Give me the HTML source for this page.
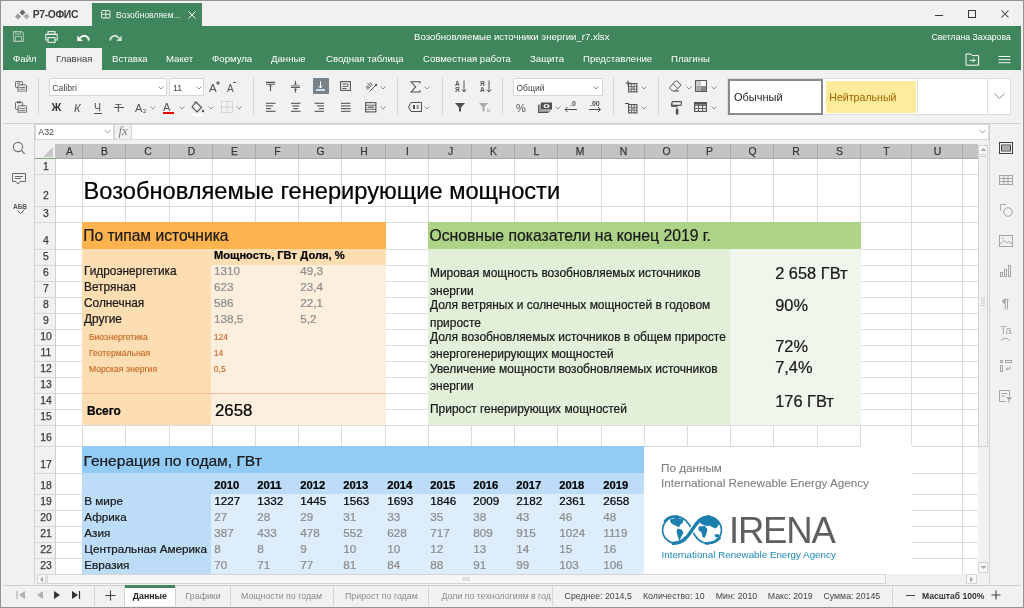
<!DOCTYPE html><html><head><meta charset="utf-8"><style>
*{margin:0;padding:0;box-sizing:border-box}
html,body{width:1024px;height:608px;overflow:hidden;background:#f1f1f1;font-family:"Liberation Sans", sans-serif;-webkit-font-smoothing:antialiased;}
.a{position:absolute}
.t{position:absolute;white-space:nowrap;line-height:1}
.b{position:absolute;white-space:nowrap;line-height:0;height:0}
#root{position:absolute;left:0;top:0;width:1024px;height:608px;will-change:transform}
</style></head><body><div id="root">
<svg class="a" style="left:14px;top:7.5px;" width="16" height="13" viewBox="0 0 16 13" fill="none" preserveAspectRatio="none"><path d="M8.5 1.5 L11.5 4.5 L8.5 7.5 L5.5 4.5Z" fill="#6a6a6a"/><path d="M4 5.5 L7 8.5 L4 11.5 L1 8.5Z" fill="#9a9a9a"/><path d="M12.5 5.5 L15.5 8.5 L12.5 11.5 L9.5 8.5Z" fill="#adadad"/></svg>
<div class="b" style="left:32.8px;top:14.63px;font-size:10.3px;color:#3a3a3a;font-weight:bold;letter-spacing:-0.35px">Р7-ОФИС</div>
<div class="a" style="left:92px;top:3px;width:110px;height:23px;background:#40865c;"></div>
<svg class="a" style="left:101px;top:10px;" width="10" height="9" viewBox="0 0 10 9" fill="none" preserveAspectRatio="none"><rect x="0.5" y="0.5" width="8.5" height="7.5" rx="1" stroke="#e8f0ea" stroke-width="1"/><path d="M4.75 0.5V8M0.5 4.25H9" stroke="#e8f0ea" stroke-width="0.9"/></svg>
<div class="b" style="left:116px;top:14.55px;font-size:8.5px;color:#f4f8f5;font-weight:normal;">Возобновляем...</div>
<svg class="a" style="left:187.5px;top:10.5px;" width="8" height="8" viewBox="0 0 8 8" fill="none" preserveAspectRatio="none"><path d="M0.5 0.5L7.5 7.5M7.5 0.5L0.5 7.5" stroke="#f4f8f5" stroke-width="1"/></svg>
<div class="a" style="left:935px;top:15px;width:8px;height:1px;background:#3a3a3a;"></div>
<div class="a" style="left:968px;top:10px;width:8px;height:8px;background:transparent;border:1px solid #3a3a3a"></div>
<svg class="a" style="left:1001px;top:10px;" width="8" height="8" viewBox="0 0 8 8" fill="none" preserveAspectRatio="none"><path d="M0.5 0.5L7.5 7.5M7.5 0.5L0.5 7.5" stroke="#3a3a3a" stroke-width="1.05"/></svg>
<div class="a" style="left:3px;top:26px;width:1018px;height:44px;background:#40865c;"></div>
<svg class="a" style="left:13px;top:31px;" width="11" height="11" viewBox="0 0 11 11" fill="none" preserveAspectRatio="none"><path d="M0.6 0.6H8.6L10.4 2.4V10.4H0.6Z" stroke="#a9c6b2" stroke-width="1.1"/><rect x="2.8" y="0.6" width="4.6" height="2.6" stroke="#a9c6b2" stroke-width="0.9"/><rect x="2.4" y="5.6" width="6.2" height="4.8" stroke="#a9c6b2" stroke-width="1"/></svg>
<svg class="a" style="left:45px;top:31px;" width="13" height="12" viewBox="0 0 13 12" fill="none" preserveAspectRatio="none"><rect x="3" y="0.6" width="7" height="2.8" stroke="#e6efe9" stroke-width="1.1"/><path d="M3 9H0.8V3.4H12.2V9H10" stroke="#e6efe9" stroke-width="1.1"/><rect x="3" y="6.6" width="7" height="4.8" stroke="#e6efe9" stroke-width="1.1"/></svg>
<svg class="a" style="left:77px;top:33px;" width="13" height="8" viewBox="0 0 13 8" fill="none" preserveAspectRatio="none"><path d="M12 7.5 C11 2, 6 1.5, 3 5" stroke="#fff" stroke-width="1.9" fill="none"/><path d="M0.3 2.5V8H5.8Z" fill="#fff"/></svg>
<svg class="a" style="left:109px;top:33px;" width="13" height="8" viewBox="0 0 13 8" fill="none" preserveAspectRatio="none"><path d="M1 7.5 C2 2, 7 1.5, 10 5" stroke="#cfe0d5" stroke-width="1.9" fill="none"/><path d="M12.7 2.5V8H7.2Z" fill="#cfe0d5"/></svg>
<div class="b" style="left:414px;top:36.67px;font-size:9.6px;color:#fff;font-weight:normal;">Возобновляемые источники энергии_r7.xlsx</div>
<div class="b" style="left:931.5px;top:36.99px;font-size:8.7px;color:#fff;font-weight:normal;">Светлана Захарова</div>
<div class="a" style="left:46px;top:48px;width:56px;height:22px;background:#f1f1f1;"></div>
<div class="b" style="left:13px;top:58.67px;font-size:9.6px;color:#fff;font-weight:normal;">Файл</div>
<div class="b" style="left:56px;top:58.67px;font-size:9.6px;color:#444;font-weight:normal;">Главная</div>
<div class="b" style="left:112px;top:58.67px;font-size:9.6px;color:#fff;font-weight:normal;">Вставка</div>
<div class="b" style="left:166px;top:58.67px;font-size:9.6px;color:#fff;font-weight:normal;">Макет</div>
<div class="b" style="left:212px;top:58.67px;font-size:9.6px;color:#fff;font-weight:normal;">Формула</div>
<div class="b" style="left:271px;top:58.67px;font-size:9.6px;color:#fff;font-weight:normal;">Данные</div>
<div class="b" style="left:326px;top:58.67px;font-size:9.6px;color:#fff;font-weight:normal;">Сводная таблица</div>
<div class="b" style="left:423px;top:58.67px;font-size:9.6px;color:#fff;font-weight:normal;">Совместная работа</div>
<div class="b" style="left:530px;top:58.67px;font-size:9.6px;color:#fff;font-weight:normal;">Защита</div>
<div class="b" style="left:583px;top:58.67px;font-size:9.6px;color:#fff;font-weight:normal;">Представление</div>
<div class="b" style="left:671px;top:58.67px;font-size:9.6px;color:#fff;font-weight:normal;">Плагины</div>
<svg class="a" style="left:965px;top:53px;" width="15" height="13" viewBox="0 0 15 13" fill="none" preserveAspectRatio="none"><path d="M1 12.2V1H6L7.3 2.6H13.6V12.2Z" stroke="#fff" stroke-width="1"/><path d="M4.5 7.3H10M8 5.3L10 7.3L8 9.3" stroke="#fff" stroke-width="1"/></svg>
<svg class="a" style="left:998px;top:55px;" width="13" height="9" viewBox="0 0 13 9" fill="none" preserveAspectRatio="none"><path d="M0.5 1.5H12.5M0.5 4.6H12.5M0.5 7.7H12.5" stroke="#fff" stroke-width="0.9"/></svg>
<div class="a" style="left:3px;top:123px;width:1018px;height:1px;background:#cfcfcf;"></div>
<div class="a" style="left:38px;top:78px;width:1px;height:37px;background:#d4d4d4;"></div>
<div class="a" style="left:253px;top:78px;width:1px;height:37px;background:#d4d4d4;"></div>
<div class="a" style="left:397px;top:78px;width:1px;height:37px;background:#d4d4d4;"></div>
<div class="a" style="left:442px;top:78px;width:1px;height:37px;background:#d4d4d4;"></div>
<div class="a" style="left:502px;top:78px;width:1px;height:37px;background:#d4d4d4;"></div>
<div class="a" style="left:613px;top:78px;width:1px;height:37px;background:#d4d4d4;"></div>
<div class="a" style="left:658px;top:78px;width:1px;height:37px;background:#d4d4d4;"></div>
<svg class="a" style="left:15px;top:81px;width:12.3px;height:11.4px" width="14" height="13" viewBox="0 0 14 13" fill="none" preserveAspectRatio="none"><rect x="0.5" y="0.5" width="8" height="7" rx="1" stroke="#505050"/><rect x="3.5" y="4.5" width="9.5" height="8" rx="1" fill="#f1f1f1" stroke="#505050"/><path d="M5 7.5H11.5M5 10H11.5" stroke="#777" stroke-width="1.3"/><path d="M2 2.5H6" stroke="#505050"/></svg><svg class="a" style="left:15px;top:100.5px;width:12.3px;height:12.3px" width="14" height="14" viewBox="0 0 14 14" fill="none" preserveAspectRatio="none"><rect x="0.5" y="1.5" width="8" height="8" rx="1" stroke="#505050"/><rect x="2.5" y="0.5" width="4" height="2" fill="#505050"/><rect x="3.5" y="5.5" width="9.5" height="8" rx="1" fill="#f1f1f1" stroke="#505050"/><path d="M5 8.5H11.5M5 11H11.5" stroke="#777" stroke-width="1.3"/></svg><div class="a" style="left:49px;top:78px;width:118px;height:18px;background:#fff;border:1px solid #d6d6d6"></div><div class="b" style="left:52.3px;top:87.99px;font-size:8.7px;color:#444;font-weight:normal;">Calibri</div><svg class="a" style="left:158px;top:86px;" width="6" height="4" viewBox="0 0 6 4" fill="none" preserveAspectRatio="none"><path d="M0.5 0.5L3 3L5.5 0.5" stroke="#888" stroke-width="0.9"/></svg><div class="a" style="left:169px;top:78px;width:35px;height:18px;background:#fff;border:1px solid #d6d6d6"></div><div class="b" style="left:173px;top:87.99px;font-size:8.7px;color:#444;font-weight:normal;">11</div><svg class="a" style="left:196px;top:86px;" width="6" height="4" viewBox="0 0 6 4" fill="none" preserveAspectRatio="none"><path d="M0.5 0.5L3 3L5.5 0.5" stroke="#888" stroke-width="0.9"/></svg><div class="b" style="left:209px;top:88.02px;font-size:11.5px;color:#505050;font-weight:normal;">A</div><svg class="a" style="left:216px;top:81px;" width="4" height="4" viewBox="0 0 4 4" fill="none" preserveAspectRatio="none"><path d="M2 0V4M0 2H4" stroke="#505050" stroke-width="1"/></svg><div class="b" style="left:227px;top:88.53px;font-size:10px;color:#505050;font-weight:normal;">A</div><div class="a" style="left:233px;top:82px;width:3px;height:1.2px;background:#505050;"></div><div class="b" style="left:51.5px;top:107.26px;font-size:10.8px;color:#333;font-weight:bold;">Ж</div><div class="b" style="left:74px;top:108.19px;font-size:11px;color:#555;font-weight:normal;font-style:italic">К</div><div class="b" style="left:94px;top:107.36px;font-size:10.5px;color:#505050;font-weight:normal;">Ч</div><div class="a" style="left:94px;top:113px;width:8px;height:1px;background:#505050;"></div><div class="b" style="left:115px;top:108.19px;font-size:11px;color:#505050;font-weight:normal;">Т</div><div class="a" style="left:114px;top:107px;width:10px;height:1px;background:#505050;"></div><div class="b" style="left:135px;top:108.19px;font-size:11px;color:#505050;font-weight:normal;">A</div><div class="b" style="left:143px;top:110.92px;font-size:6px;color:#505050;font-weight:normal;">2</div><svg class="a" style="left:150px;top:106px;" width="6" height="4" viewBox="0 0 6 4" fill="none" preserveAspectRatio="none"><path d="M0.5 0.5L3 3L5.5 0.5" stroke="#888" stroke-width="0.9"/></svg><div class="b" style="left:163px;top:107.19px;font-size:11px;color:#505050;font-weight:normal;">A</div><div class="a" style="left:163px;top:112px;width:11px;height:2px;background:#e00;"></div><svg class="a" style="left:179px;top:106px;" width="6" height="4" viewBox="0 0 6 4" fill="none" preserveAspectRatio="none"><path d="M0.5 0.5L3 3L5.5 0.5" stroke="#888" stroke-width="0.9"/></svg><svg class="a" style="left:191px;top:101px;" width="14" height="13" viewBox="0 0 14 13" fill="none" preserveAspectRatio="none"><path d="M5 1L10.5 6.5L6 11L1 6Z" stroke="#505050" stroke-width="1.1" fill="#f1f1f1"/><path d="M3 0.5L5 2.5" stroke="#505050"/><circle cx="12" cy="10" r="1.2" fill="#505050"/></svg><div class="a" style="left:191px;top:114px;width:12px;height:2px;background:#fff;"></div><svg class="a" style="left:208px;top:106px;" width="6" height="4" viewBox="0 0 6 4" fill="none" preserveAspectRatio="none"><path d="M0.5 0.5L3 3L5.5 0.5" stroke="#888" stroke-width="0.9"/></svg><svg class="a" style="left:221px;top:101px;" width="12" height="12" viewBox="0 0 12 12" fill="none" preserveAspectRatio="none"><path d="M0.5 0.5H11.5V11.5H0.5ZM6 0.5V11.5M0.5 6H11.5" stroke="#bbb" stroke-dasharray="1 1"/></svg><svg class="a" style="left:236px;top:106px;" width="6" height="4" viewBox="0 0 6 4" fill="none" preserveAspectRatio="none"><path d="M0.5 0.5L3 3L5.5 0.5" stroke="#888" stroke-width="0.9"/></svg><svg class="a" style="left:265px;top:81px;" width="12" height="11" viewBox="0 0 12 11" fill="none" preserveAspectRatio="none"><path d="M1 1.4H10M1 3.3H10" stroke="#555" stroke-width="1.1"/><path d="M5.5 3.5V10" stroke="#555" stroke-width="1.1"/><path d="M4 5.5L5.5 4L7 5.5" stroke="#555" stroke-width="0.8"/></svg><svg class="a" style="left:290px;top:80px;" width="12" height="13" viewBox="0 0 12 13" fill="none" preserveAspectRatio="none"><path d="M1 5.8H10" stroke="#999" stroke-width="1.4"/><path d="M1 7.4H10" stroke="#555" stroke-width="1.1"/><path d="M5.5 1V5M5.5 8.5V12.5" stroke="#555" stroke-width="1.1"/><path d="M4 3.5L5.5 5L7 3.5M4 10L5.5 8.5L7 10" stroke="#555" stroke-width="0.8"/></svg><div class="a" style="left:313px;top:78px;width:16px;height:16px;background:#76828c;border-radius:1px"></div><svg class="a" style="left:313px;top:78px;" width="16" height="16" viewBox="0 0 16 16" fill="none" preserveAspectRatio="none"><path d="M7.5 3.5V10" stroke="#fff" stroke-width="1"/><path d="M5.5 8L7.5 10L9.5 8" stroke="#fff" stroke-width="0.9"/><rect x="3" y="11" width="9" height="2" fill="#d8dde1"/></svg><svg class="a" style="left:340px;top:81px;" width="11" height="10" viewBox="0 0 11 10" fill="none" preserveAspectRatio="none"><rect x="0.6" y="0.6" width="9.8" height="8.8" stroke="#555" stroke-width="1.1"/><path d="M2.5 3H6.5M2.5 5.5H6.5M2.5 7.5H6.5" stroke="#555" stroke-width="1"/><path d="M6.5 3H8V5.5H6.5" stroke="#555" stroke-width="0.8"/></svg><svg class="a" style="left:365px;top:80px;" width="13" height="13" viewBox="0 0 13 13" fill="none" preserveAspectRatio="none"><text x="0" y="8" font-size="7" font-weight="bold" fill="#777" transform="rotate(-45 4 6)" font-family="Liberation Sans">ab</text><path d="M4.5 11.5L11 5" stroke="#555" stroke-width="1"/><circle cx="11" cy="5" r="1.2" fill="#555"/></svg><svg class="a" style="left:380px;top:86px;" width="6" height="4" viewBox="0 0 6 4" fill="none" preserveAspectRatio="none"><path d="M0.5 0.5L3 3L5.5 0.5" stroke="#888" stroke-width="0.9"/></svg><svg class="a" style="left:265px;top:102px;" width="11" height="11" viewBox="0 0 11 11" fill="none" preserveAspectRatio="none"><path d="M1 1.3H10.5" stroke="#555" stroke-width="1.1"/><path d="M1 3.9H8" stroke="#555" stroke-width="1.1"/><path d="M1 6.6H6" stroke="#555" stroke-width="1.1"/><path d="M1 9.3H10.5" stroke="#555" stroke-width="1.1"/></svg><svg class="a" style="left:290px;top:102px;" width="11" height="11" viewBox="0 0 11 11" fill="none" preserveAspectRatio="none"><path d="M1 1.3H10.5" stroke="#555" stroke-width="1.1"/><path d="M2.3 3.9H9.2" stroke="#555" stroke-width="1.1"/><path d="M3.3 6.6H8.2" stroke="#555" stroke-width="1.1"/><path d="M1 9.3H10.5" stroke="#555" stroke-width="1.1"/></svg><svg class="a" style="left:314px;top:102px;" width="11" height="11" viewBox="0 0 11 11" fill="none" preserveAspectRatio="none"><path d="M0.5 1.3H10" stroke="#555" stroke-width="1.1"/><path d="M3 3.9H10" stroke="#555" stroke-width="1.1"/><path d="M5 6.6H10" stroke="#555" stroke-width="1.1"/><path d="M0.5 9.3H10" stroke="#555" stroke-width="1.1"/></svg><svg class="a" style="left:340px;top:102px;" width="11" height="11" viewBox="0 0 11 11" fill="none" preserveAspectRatio="none"><path d="M1 1.3H10.5" stroke="#555" stroke-width="1.1"/><path d="M1 3.9H10.5" stroke="#555" stroke-width="1.1"/><path d="M1 6.6H10.5" stroke="#555" stroke-width="1.1"/><path d="M1 9.3H10.5" stroke="#555" stroke-width="1.1"/></svg><svg class="a" style="left:365px;top:102px;" width="12" height="11" viewBox="0 0 12 11" fill="none" preserveAspectRatio="none"><rect x="0.6" y="0.6" width="10.3" height="9.3" stroke="#555" stroke-width="1.1"/><path d="M0.6 3.2H11M0.6 7.3H11" stroke="#555" stroke-width="0.9"/><path d="M2.5 5.2H9" stroke="#555" stroke-width="1.2"/></svg><svg class="a" style="left:380px;top:106px;" width="6" height="4" viewBox="0 0 6 4" fill="none" preserveAspectRatio="none"><path d="M0.5 0.5L3 3L5.5 0.5" stroke="#888" stroke-width="0.9"/></svg><svg class="a" style="left:410px;top:81px;" width="11" height="12" viewBox="0 0 11 12" fill="none" preserveAspectRatio="none"><path d="M10 2.5V0.8H1.2L5.6 5.9L1.2 11H10V9.3" stroke="#505050" stroke-width="1.1" stroke-linejoin="miter"/></svg><svg class="a" style="left:424px;top:86px;" width="6" height="4" viewBox="0 0 6 4" fill="none" preserveAspectRatio="none"><path d="M0.5 0.5L3 3L5.5 0.5" stroke="#888" stroke-width="0.9"/></svg><svg class="a" style="left:408px;top:102px;" width="14" height="10" viewBox="0 0 14 10" fill="none" preserveAspectRatio="none"><path d="M3 0.5H13.5V9.5H3L0.5 5Z" stroke="#505050"/><rect x="5" y="3" width="2" height="4" fill="#505050"/><path d="M8.5 4H11M8.5 6H11" stroke="#505050"/></svg><svg class="a" style="left:424px;top:106px;" width="6" height="4" viewBox="0 0 6 4" fill="none" preserveAspectRatio="none"><path d="M0.5 0.5L3 3L5.5 0.5" stroke="#888" stroke-width="0.9"/></svg><div class="b" style="left:455px;top:83.75px;font-size:6.5px;color:#555;font-weight:bold;">A</div><div class="b" style="left:455px;top:89.75px;font-size:6.5px;color:#555;font-weight:bold;">Я</div><svg class="a" style="left:461px;top:80px;" width="6" height="13" viewBox="0 0 6 13" fill="none" preserveAspectRatio="none"><path d="M3 0.5V12M0.8 9.5L3 12L5.2 9.5" stroke="#555" stroke-width="1"/></svg><div class="b" style="left:480px;top:83.75px;font-size:6.5px;color:#555;font-weight:bold;">Я</div><div class="b" style="left:480px;top:89.75px;font-size:6.5px;color:#555;font-weight:bold;">A</div><svg class="a" style="left:486px;top:80px;" width="6" height="13" viewBox="0 0 6 13" fill="none" preserveAspectRatio="none"><path d="M3 0.5V12M0.8 9.5L3 12L5.2 9.5" stroke="#555" stroke-width="1"/></svg><svg class="a" style="left:455px;top:103px;" width="10" height="9" viewBox="0 0 10 9" fill="none" preserveAspectRatio="none"><path d="M0 0H10L6 4.5V9L4 8V4.5Z" fill="#505050"/></svg><svg class="a" style="left:479px;top:103px;" width="12" height="10" viewBox="0 0 12 10" fill="none" preserveAspectRatio="none"><path d="M0 0H9L5.5 4V9L3.5 8V4Z" fill="#aaa"/><path d="M8 6L11 9M11 6L8 9" stroke="#aaa"/></svg><div class="a" style="left:513px;top:78px;width:90px;height:18px;background:#fff;border:1px solid #d6d6d6"></div><div class="b" style="left:516.5px;top:88.05px;font-size:8.5px;color:#444;font-weight:normal;">Общий</div><svg class="a" style="left:593px;top:86px;" width="6" height="4" viewBox="0 0 6 4" fill="none" preserveAspectRatio="none"><path d="M0.5 0.5L3 3L5.5 0.5" stroke="#888" stroke-width="0.9"/></svg><div class="b" style="left:516px;top:108.19px;font-size:11px;color:#505050;font-weight:normal;">%</div><svg class="a" style="left:538px;top:102px;" width="15" height="11" viewBox="0 0 15 11" fill="none" preserveAspectRatio="none"><path d="M0.6 3V10.4H10.5" stroke="#505050" stroke-width="1.1"/><path d="M2 1.8V9H12.5" stroke="#505050" stroke-width="0.9"/><rect x="3" y="0.5" width="11" height="7" fill="#505050"/><ellipse cx="8.5" cy="4" rx="3" ry="2" fill="#f1f1f1"/><circle cx="8.5" cy="4" r="1.2" fill="#505050"/></svg><svg class="a" style="left:555px;top:106px;" width="6" height="4" viewBox="0 0 6 4" fill="none" preserveAspectRatio="none"><path d="M0.5 0.5L3 3L5.5 0.5" stroke="#888" stroke-width="0.9"/></svg><div class="b" style="left:570px;top:103.57px;font-size:7px;color:#505050;font-weight:bold;">.0</div><svg class="a" style="left:564px;top:106px;" width="13" height="7" viewBox="0 0 13 7" fill="none" preserveAspectRatio="none"><path d="M13 3.5H1M3.5 1L1 3.5L3.5 6" stroke="#505050"/></svg><div class="b" style="left:590px;top:103.57px;font-size:7px;color:#505050;font-weight:bold;">.00</div><svg class="a" style="left:589px;top:106px;" width="13" height="7" viewBox="0 0 13 7" fill="none" preserveAspectRatio="none"><path d="M0 3.5H11.5M9 1L11.5 3.5L9 6" stroke="#505050"/></svg><svg class="a" style="left:625px;top:80px;" width="6" height="6" viewBox="0 0 6 6" fill="none" preserveAspectRatio="none"><path d="M3 0.5V5.5M0.5 3H5.5" stroke="#505050" stroke-width="1"/></svg><svg class="a" style="left:627.5px;top:82.5px;" width="10" height="10" viewBox="0 0 10 10" fill="none" preserveAspectRatio="none"><rect x="0.6" y="0.6" width="8.3" height="8.3" stroke="#505050" stroke-width="1.1"/><path d="M0.6 3.5H9M0.6 6.2H9M3.4 0.6V9M6.1 0.6V9" stroke="#505050" stroke-width="0.8"/><rect x="3.4" y="3.5" width="2.7" height="2.7" fill="#999"/></svg><svg class="a" style="left:641px;top:86px;" width="6" height="4" viewBox="0 0 6 4" fill="none" preserveAspectRatio="none"><path d="M0.5 0.5L3 3L5.5 0.5" stroke="#888" stroke-width="0.9"/></svg><div class="a" style="left:625px;top:102.5px;width:4px;height:1px;background:#505050;"></div><svg class="a" style="left:627.5px;top:103.5px;" width="10" height="10" viewBox="0 0 10 10" fill="none" preserveAspectRatio="none"><rect x="0.6" y="0.6" width="8.3" height="8.3" stroke="#505050" stroke-width="1.1"/><path d="M0.6 3.5H9M0.6 6.2H9M3.4 0.6V9M6.1 0.6V9" stroke="#505050" stroke-width="0.8"/><rect x="3.4" y="3.5" width="2.7" height="2.7" fill="#999"/></svg><svg class="a" style="left:641px;top:106px;" width="6" height="4" viewBox="0 0 6 4" fill="none" preserveAspectRatio="none"><path d="M0.5 0.5L3 3L5.5 0.5" stroke="#888" stroke-width="0.9"/></svg><svg class="a" style="left:669px;top:80px;" width="13" height="12" viewBox="0 0 13 12" fill="none" preserveAspectRatio="none"><path d="M1.2 6.8L6.5 1.2Q7.3 0.5 8.1 1.2L11.5 4.3Q12.2 5 11.5 5.8L6.3 11H3.6L1.2 8.6Q0.5 7.7 1.2 6.8Z" stroke="#505050" stroke-width="1"/><path d="M4.2 4L9 8.8" stroke="#505050" stroke-width="0.9"/><path d="M6 11H10" stroke="#505050" stroke-width="1"/></svg><svg class="a" style="left:686px;top:86px;" width="6" height="4" viewBox="0 0 6 4" fill="none" preserveAspectRatio="none"><path d="M0.5 0.5L3 3L5.5 0.5" stroke="#888" stroke-width="0.9"/></svg><svg class="a" style="left:695px;top:80px;" width="12" height="12" viewBox="0 0 12 12" fill="none" preserveAspectRatio="none"><rect x="0.6" y="0.6" width="10.8" height="10.8" stroke="#505050" stroke-width="1.1"/><rect x="1.2" y="1.2" width="5" height="5" fill="#c8c8c8"/><rect x="6" y="1.2" width="5" height="5" fill="#fafafa"/><rect x="1.2" y="6" width="5" height="5" fill="#aaa"/><rect x="6" y="6" width="5" height="5" fill="#888"/></svg><svg class="a" style="left:711px;top:86px;" width="6" height="4" viewBox="0 0 6 4" fill="none" preserveAspectRatio="none"><path d="M0.5 0.5L3 3L5.5 0.5" stroke="#888" stroke-width="0.9"/></svg><svg class="a" style="left:671px;top:101px;" width="11" height="14" viewBox="0 0 11 14" fill="none" preserveAspectRatio="none"><rect x="1" y="0.6" width="9.4" height="3.8" rx="0.8" stroke="#505050" stroke-width="1.1"/><path d="M1 2.5H0.5V5.5H6V8" stroke="#505050" stroke-width="0.9"/><rect x="4.8" y="8" width="2.6" height="5.5" rx="0.5" fill="#505050"/></svg><svg class="a" style="left:694px;top:102px;" width="13" height="10" viewBox="0 0 13 10" fill="none" preserveAspectRatio="none"><rect x="0.6" y="0.6" width="11.8" height="8.8" stroke="#505050" stroke-width="1.1"/><path d="M0.6 3.4H12.4M0.6 6.4H12.4M4.6 0.6V9.4M8.6 0.6V9.4" stroke="#505050" stroke-width="0.9"/><rect x="0.6" y="0.6" width="11.8" height="2" fill="#505050"/></svg><svg class="a" style="left:711px;top:106px;" width="6" height="4" viewBox="0 0 6 4" fill="none" preserveAspectRatio="none"><path d="M0.5 0.5L3 3L5.5 0.5" stroke="#888" stroke-width="0.9"/></svg><div class="a" style="left:727px;top:78px;width:284px;height:37px;background:#fff;border:1px solid #dcdcdc"></div><div class="a" style="left:728px;top:79px;width:95px;height:36px;background:#fff;border:2px solid #8a8a8a"></div><div class="b" style="left:734px;top:97.19px;font-size:11px;color:#222;font-weight:normal;">Обычный</div><div class="a" style="left:826px;top:81px;width:90px;height:32px;background:#ffeb9c;"></div><div class="b" style="left:829.3px;top:97.33px;font-size:10.6px;color:#9c6500;font-weight:normal;">Нейтральный</div><div class="a" style="left:987px;top:78px;width:1px;height:37px;background:#dcdcdc;"></div><div class="a" style="left:917px;top:79px;width:1px;height:35px;background:#e4e4e4;"></div><svg class="a" style="left:994px;top:93px;" width="11" height="7" viewBox="0 0 11 7" fill="none" preserveAspectRatio="none"><path d="M0.5 0.5L5.5 5.5L10.5 0.5" stroke="#888"/></svg>
<div class="a" style="left:35px;top:124px;width:79px;height:16px;background:#fff;border:1px solid #d8d8d8"></div>
<div class="b" style="left:38.3px;top:131.97px;font-size:8.75px;color:#444;font-weight:normal;">A32</div>
<svg class="a" style="left:104px;top:129px;" width="7" height="5" viewBox="0 0 7 5" fill="none" preserveAspectRatio="none"><path d="M0.5 1L3.5 4L6.5 1" stroke="#999"/></svg>
<div class="a" style="left:114px;top:124px;width:18px;height:16px;background:#f1f1f1;border:1px solid #d8d8d8"></div>
<div class="b" style="left:118.5px;top:131.30px;font-size:13px;color:#808080;font-weight:normal;font-family:'Liberation Serif',serif"><i>fx</i></div>
<div class="a" style="left:131px;top:124px;width:858px;height:16px;background:#fff;border:1px solid #d8d8d8"></div>
<svg class="a" style="left:979px;top:129px;" width="7" height="5" viewBox="0 0 7 5" fill="none" preserveAspectRatio="none"><path d="M0.5 1L3.5 4L6.5 1" stroke="#999"/></svg>
<div class="a" style="left:34px;top:123px;width:1px;height:462px;background:#d4d4d4;"></div>
<svg class="a" style="left:12px;top:141px;" width="14" height="14" viewBox="0 0 14 14" fill="none" preserveAspectRatio="none"><circle cx="6" cy="6" r="4.6" stroke="#707070" stroke-width="1.1"/><path d="M9.3 9.3L12.8 12.8" stroke="#707070" stroke-width="1.2"/></svg>
<svg class="a" style="left:12px;top:173px;" width="14" height="12" viewBox="0 0 14 12" fill="none" preserveAspectRatio="none"><path d="M0.5 0.5H13.5V8.5H8L6 11L4 8.5H0.5Z" stroke="#666"/><path d="M3 3.5H11M3 5.5H9" stroke="#666"/></svg>
<div class="t" style="left:13px;top:204px;font-size:6.5px;color:#555;font-weight:bold;">АБВ</div>
<svg class="a" style="left:17px;top:209px;" width="8" height="6" viewBox="0 0 8 6" fill="none" preserveAspectRatio="none"><path d="M0.5 1.5L3.5 4.5L7.5 0.5" stroke="#555"/></svg>
<div class="a" style="left:35px;top:140px;width:943px;height:434px;background:#fff;overflow:hidden">
<div class="a" style="left:-35px;top:-140px;width:1024px;height:608px">
<div class="a" style="left:35px;top:140px;width:943px;height:4px;background:#f1f1f1;"></div>
<div class="a" style="left:82px;top:158px;width:1px;height:420px;background:#dcdcdc;"></div><div class="a" style="left:125px;top:158px;width:1px;height:420px;background:#dcdcdc;"></div><div class="a" style="left:169px;top:158px;width:1px;height:420px;background:#dcdcdc;"></div><div class="a" style="left:212px;top:158px;width:1px;height:420px;background:#dcdcdc;"></div><div class="a" style="left:255px;top:158px;width:1px;height:420px;background:#dcdcdc;"></div><div class="a" style="left:298px;top:158px;width:1px;height:420px;background:#dcdcdc;"></div><div class="a" style="left:341px;top:158px;width:1px;height:420px;background:#dcdcdc;"></div><div class="a" style="left:385px;top:158px;width:1px;height:420px;background:#dcdcdc;"></div><div class="a" style="left:428px;top:158px;width:1px;height:420px;background:#dcdcdc;"></div><div class="a" style="left:471px;top:158px;width:1px;height:420px;background:#dcdcdc;"></div><div class="a" style="left:514px;top:158px;width:1px;height:420px;background:#dcdcdc;"></div><div class="a" style="left:557px;top:158px;width:1px;height:420px;background:#dcdcdc;"></div><div class="a" style="left:601px;top:158px;width:1px;height:420px;background:#dcdcdc;"></div><div class="a" style="left:644px;top:158px;width:1px;height:420px;background:#dcdcdc;"></div><div class="a" style="left:687px;top:158px;width:1px;height:420px;background:#dcdcdc;"></div><div class="a" style="left:730px;top:158px;width:1px;height:420px;background:#dcdcdc;"></div><div class="a" style="left:773px;top:158px;width:1px;height:420px;background:#dcdcdc;"></div><div class="a" style="left:817px;top:158px;width:1px;height:420px;background:#dcdcdc;"></div><div class="a" style="left:860px;top:158px;width:1px;height:420px;background:#dcdcdc;"></div><div class="a" style="left:911px;top:158px;width:1px;height:420px;background:#dcdcdc;"></div><div class="a" style="left:962px;top:158px;width:1px;height:420px;background:#dcdcdc;"></div><div class="a" style="left:1013px;top:158px;width:1px;height:420px;background:#dcdcdc;"></div><div class="a" style="left:55px;top:174px;width:930px;height:1px;background:#dcdcdc;"></div><div class="a" style="left:55px;top:206px;width:930px;height:1px;background:#dcdcdc;"></div><div class="a" style="left:55px;top:222px;width:930px;height:1px;background:#dcdcdc;"></div><div class="a" style="left:55px;top:249px;width:930px;height:1px;background:#dcdcdc;"></div><div class="a" style="left:55px;top:265px;width:930px;height:1px;background:#dcdcdc;"></div><div class="a" style="left:55px;top:281px;width:930px;height:1px;background:#dcdcdc;"></div><div class="a" style="left:55px;top:297px;width:930px;height:1px;background:#dcdcdc;"></div><div class="a" style="left:55px;top:313px;width:930px;height:1px;background:#dcdcdc;"></div><div class="a" style="left:55px;top:329px;width:930px;height:1px;background:#dcdcdc;"></div><div class="a" style="left:55px;top:345px;width:930px;height:1px;background:#dcdcdc;"></div><div class="a" style="left:55px;top:361px;width:930px;height:1px;background:#dcdcdc;"></div><div class="a" style="left:55px;top:377px;width:930px;height:1px;background:#dcdcdc;"></div><div class="a" style="left:55px;top:393px;width:930px;height:1px;background:#dcdcdc;"></div><div class="a" style="left:55px;top:409px;width:930px;height:1px;background:#dcdcdc;"></div><div class="a" style="left:55px;top:425px;width:930px;height:1px;background:#dcdcdc;"></div><div class="a" style="left:55px;top:446px;width:930px;height:1px;background:#dcdcdc;"></div><div class="a" style="left:55px;top:473px;width:930px;height:1px;background:#dcdcdc;"></div><div class="a" style="left:55px;top:494px;width:930px;height:1px;background:#dcdcdc;"></div><div class="a" style="left:55px;top:510px;width:930px;height:1px;background:#dcdcdc;"></div><div class="a" style="left:55px;top:526px;width:930px;height:1px;background:#dcdcdc;"></div><div class="a" style="left:55px;top:542px;width:930px;height:1px;background:#dcdcdc;"></div><div class="a" style="left:55px;top:558px;width:930px;height:1px;background:#dcdcdc;"></div><div class="a" style="left:55px;top:574px;width:930px;height:1px;background:#dcdcdc;"></div><div class="a" style="left:55px;top:590px;width:930px;height:1px;background:#dcdcdc;"></div>
<div class="a" style="left:55px;top:144px;width:923px;height:15px;background:#c3c3c3;"></div>
<div class="a" style="left:55px;top:158px;width:923px;height:1px;background:#a9a9a9;"></div>
<div class="a" style="left:82px;top:144px;width:1px;height:14px;background:#aaaaaa;"></div>
<div class="b" style="left:56px;width:27px;top:152.40px;font-size:10.4px;color:#3a3a3a;text-align:center;-webkit-text-stroke:0.25px #3a3a3a">A</div>
<div class="a" style="left:125px;top:144px;width:1px;height:14px;background:#aaaaaa;"></div>
<div class="b" style="left:83px;width:43px;top:152.40px;font-size:10.4px;color:#3a3a3a;text-align:center;-webkit-text-stroke:0.25px #3a3a3a">B</div>
<div class="a" style="left:169px;top:144px;width:1px;height:14px;background:#aaaaaa;"></div>
<div class="b" style="left:126px;width:44px;top:152.40px;font-size:10.4px;color:#3a3a3a;text-align:center;-webkit-text-stroke:0.25px #3a3a3a">C</div>
<div class="a" style="left:212px;top:144px;width:1px;height:14px;background:#aaaaaa;"></div>
<div class="b" style="left:170px;width:43px;top:152.40px;font-size:10.4px;color:#3a3a3a;text-align:center;-webkit-text-stroke:0.25px #3a3a3a">D</div>
<div class="a" style="left:255px;top:144px;width:1px;height:14px;background:#aaaaaa;"></div>
<div class="b" style="left:213px;width:43px;top:152.40px;font-size:10.4px;color:#3a3a3a;text-align:center;-webkit-text-stroke:0.25px #3a3a3a">E</div>
<div class="a" style="left:298px;top:144px;width:1px;height:14px;background:#aaaaaa;"></div>
<div class="b" style="left:256px;width:43px;top:152.40px;font-size:10.4px;color:#3a3a3a;text-align:center;-webkit-text-stroke:0.25px #3a3a3a">F</div>
<div class="a" style="left:341px;top:144px;width:1px;height:14px;background:#aaaaaa;"></div>
<div class="b" style="left:299px;width:43px;top:152.40px;font-size:10.4px;color:#3a3a3a;text-align:center;-webkit-text-stroke:0.25px #3a3a3a">G</div>
<div class="a" style="left:385px;top:144px;width:1px;height:14px;background:#aaaaaa;"></div>
<div class="b" style="left:342px;width:44px;top:152.40px;font-size:10.4px;color:#3a3a3a;text-align:center;-webkit-text-stroke:0.25px #3a3a3a">H</div>
<div class="a" style="left:428px;top:144px;width:1px;height:14px;background:#aaaaaa;"></div>
<div class="b" style="left:386px;width:43px;top:152.40px;font-size:10.4px;color:#3a3a3a;text-align:center;-webkit-text-stroke:0.25px #3a3a3a">I</div>
<div class="a" style="left:471px;top:144px;width:1px;height:14px;background:#aaaaaa;"></div>
<div class="b" style="left:429px;width:43px;top:152.40px;font-size:10.4px;color:#3a3a3a;text-align:center;-webkit-text-stroke:0.25px #3a3a3a">J</div>
<div class="a" style="left:514px;top:144px;width:1px;height:14px;background:#aaaaaa;"></div>
<div class="b" style="left:472px;width:43px;top:152.40px;font-size:10.4px;color:#3a3a3a;text-align:center;-webkit-text-stroke:0.25px #3a3a3a">K</div>
<div class="a" style="left:557px;top:144px;width:1px;height:14px;background:#aaaaaa;"></div>
<div class="b" style="left:515px;width:43px;top:152.40px;font-size:10.4px;color:#3a3a3a;text-align:center;-webkit-text-stroke:0.25px #3a3a3a">L</div>
<div class="a" style="left:601px;top:144px;width:1px;height:14px;background:#aaaaaa;"></div>
<div class="b" style="left:558px;width:44px;top:152.40px;font-size:10.4px;color:#3a3a3a;text-align:center;-webkit-text-stroke:0.25px #3a3a3a">M</div>
<div class="a" style="left:644px;top:144px;width:1px;height:14px;background:#aaaaaa;"></div>
<div class="b" style="left:602px;width:43px;top:152.40px;font-size:10.4px;color:#3a3a3a;text-align:center;-webkit-text-stroke:0.25px #3a3a3a">N</div>
<div class="a" style="left:687px;top:144px;width:1px;height:14px;background:#aaaaaa;"></div>
<div class="b" style="left:645px;width:43px;top:152.40px;font-size:10.4px;color:#3a3a3a;text-align:center;-webkit-text-stroke:0.25px #3a3a3a">O</div>
<div class="a" style="left:730px;top:144px;width:1px;height:14px;background:#aaaaaa;"></div>
<div class="b" style="left:688px;width:43px;top:152.40px;font-size:10.4px;color:#3a3a3a;text-align:center;-webkit-text-stroke:0.25px #3a3a3a">P</div>
<div class="a" style="left:773px;top:144px;width:1px;height:14px;background:#aaaaaa;"></div>
<div class="b" style="left:731px;width:43px;top:152.40px;font-size:10.4px;color:#3a3a3a;text-align:center;-webkit-text-stroke:0.25px #3a3a3a">Q</div>
<div class="a" style="left:817px;top:144px;width:1px;height:14px;background:#aaaaaa;"></div>
<div class="b" style="left:774px;width:44px;top:152.40px;font-size:10.4px;color:#3a3a3a;text-align:center;-webkit-text-stroke:0.25px #3a3a3a">R</div>
<div class="a" style="left:860px;top:144px;width:1px;height:14px;background:#aaaaaa;"></div>
<div class="b" style="left:818px;width:43px;top:152.40px;font-size:10.4px;color:#3a3a3a;text-align:center;-webkit-text-stroke:0.25px #3a3a3a">S</div>
<div class="a" style="left:911px;top:144px;width:1px;height:14px;background:#aaaaaa;"></div>
<div class="b" style="left:861px;width:51px;top:152.40px;font-size:10.4px;color:#3a3a3a;text-align:center;-webkit-text-stroke:0.25px #3a3a3a">T</div>
<div class="a" style="left:962px;top:144px;width:1px;height:14px;background:#aaaaaa;"></div>
<div class="b" style="left:912px;width:51px;top:152.40px;font-size:10.4px;color:#3a3a3a;text-align:center;-webkit-text-stroke:0.25px #3a3a3a">U</div>
<div class="a" style="left:1013px;top:144px;width:1px;height:14px;background:#aaaaaa;"></div>
<div class="b" style="left:963px;width:51px;top:152.40px;font-size:10.4px;color:#3a3a3a;text-align:center;-webkit-text-stroke:0.25px #3a3a3a">V</div>
<div class="a" style="left:35px;top:144px;width:20px;height:15px;background:#f1f1f1;"></div>
<svg class="a" style="left:43px;top:147px;" width="10" height="10" viewBox="0 0 10 10" fill="none" preserveAspectRatio="none"><path d="M10 0V10H0Z" fill="#c8c8c8"/></svg>
<div class="a" style="left:35px;top:158px;width:20px;height:1px;background:#7fa27a;"></div>
<div class="a" style="left:35px;top:159px;width:20px;height:420px;background:#f1f1f1;"></div>
<div class="a" style="left:55px;top:159px;width:1px;height:420px;background:#d0d0d0;"></div>
<div class="a" style="left:35px;top:174px;width:20px;height:1px;background:#d8d8d8;"></div>
<div class="b" style="left:36px;width:20px;top:167.20px;font-size:10.4px;color:#3a3a3a;text-align:center;-webkit-text-stroke:0.25px #3a3a3a">1</div>
<div class="a" style="left:35px;top:206px;width:20px;height:1px;background:#d8d8d8;"></div>
<div class="b" style="left:36px;width:20px;top:195.80px;font-size:10.4px;color:#3a3a3a;text-align:center;-webkit-text-stroke:0.25px #3a3a3a">2</div>
<div class="a" style="left:35px;top:222px;width:20px;height:1px;background:#d8d8d8;"></div>
<div class="b" style="left:36px;width:20px;top:213.60px;font-size:10.4px;color:#3a3a3a;text-align:center;-webkit-text-stroke:0.25px #3a3a3a">3</div>
<div class="a" style="left:35px;top:249px;width:20px;height:1px;background:#d8d8d8;"></div>
<div class="b" style="left:36px;width:20px;top:240.60px;font-size:10.4px;color:#3a3a3a;text-align:center;-webkit-text-stroke:0.25px #3a3a3a">4</div>
<div class="a" style="left:35px;top:265px;width:20px;height:1px;background:#d8d8d8;"></div>
<div class="b" style="left:36px;width:20px;top:256.60px;font-size:10.4px;color:#3a3a3a;text-align:center;-webkit-text-stroke:0.25px #3a3a3a">5</div>
<div class="a" style="left:35px;top:281px;width:20px;height:1px;background:#d8d8d8;"></div>
<div class="b" style="left:36px;width:20px;top:272.60px;font-size:10.4px;color:#3a3a3a;text-align:center;-webkit-text-stroke:0.25px #3a3a3a">6</div>
<div class="a" style="left:35px;top:297px;width:20px;height:1px;background:#d8d8d8;"></div>
<div class="b" style="left:36px;width:20px;top:288.60px;font-size:10.4px;color:#3a3a3a;text-align:center;-webkit-text-stroke:0.25px #3a3a3a">7</div>
<div class="a" style="left:35px;top:313px;width:20px;height:1px;background:#d8d8d8;"></div>
<div class="b" style="left:36px;width:20px;top:304.60px;font-size:10.4px;color:#3a3a3a;text-align:center;-webkit-text-stroke:0.25px #3a3a3a">8</div>
<div class="a" style="left:35px;top:329px;width:20px;height:1px;background:#d8d8d8;"></div>
<div class="b" style="left:36px;width:20px;top:320.60px;font-size:10.4px;color:#3a3a3a;text-align:center;-webkit-text-stroke:0.25px #3a3a3a">9</div>
<div class="a" style="left:35px;top:345px;width:20px;height:1px;background:#d8d8d8;"></div>
<div class="b" style="left:36px;width:20px;top:336.60px;font-size:10.4px;color:#3a3a3a;text-align:center;-webkit-text-stroke:0.25px #3a3a3a">10</div>
<div class="a" style="left:35px;top:361px;width:20px;height:1px;background:#d8d8d8;"></div>
<div class="b" style="left:36px;width:20px;top:352.60px;font-size:10.4px;color:#3a3a3a;text-align:center;-webkit-text-stroke:0.25px #3a3a3a">11</div>
<div class="a" style="left:35px;top:377px;width:20px;height:1px;background:#d8d8d8;"></div>
<div class="b" style="left:36px;width:20px;top:368.60px;font-size:10.4px;color:#3a3a3a;text-align:center;-webkit-text-stroke:0.25px #3a3a3a">12</div>
<div class="a" style="left:35px;top:393px;width:20px;height:1px;background:#d8d8d8;"></div>
<div class="b" style="left:36px;width:20px;top:384.60px;font-size:10.4px;color:#3a3a3a;text-align:center;-webkit-text-stroke:0.25px #3a3a3a">13</div>
<div class="a" style="left:35px;top:409px;width:20px;height:1px;background:#d8d8d8;"></div>
<div class="b" style="left:36px;width:20px;top:400.60px;font-size:10.4px;color:#3a3a3a;text-align:center;-webkit-text-stroke:0.25px #3a3a3a">14</div>
<div class="a" style="left:35px;top:425px;width:20px;height:1px;background:#d8d8d8;"></div>
<div class="b" style="left:36px;width:20px;top:416.60px;font-size:10.4px;color:#3a3a3a;text-align:center;-webkit-text-stroke:0.25px #3a3a3a">15</div>
<div class="a" style="left:35px;top:446px;width:20px;height:1px;background:#d8d8d8;"></div>
<div class="b" style="left:36px;width:20px;top:437.60px;font-size:10.4px;color:#3a3a3a;text-align:center;-webkit-text-stroke:0.25px #3a3a3a">16</div>
<div class="a" style="left:35px;top:473px;width:20px;height:1px;background:#d8d8d8;"></div>
<div class="b" style="left:36px;width:20px;top:464.60px;font-size:10.4px;color:#3a3a3a;text-align:center;-webkit-text-stroke:0.25px #3a3a3a">17</div>
<div class="a" style="left:35px;top:494px;width:20px;height:1px;background:#d8d8d8;"></div>
<div class="b" style="left:36px;width:20px;top:485.60px;font-size:10.4px;color:#3a3a3a;text-align:center;-webkit-text-stroke:0.25px #3a3a3a">18</div>
<div class="a" style="left:35px;top:510px;width:20px;height:1px;background:#d8d8d8;"></div>
<div class="b" style="left:36px;width:20px;top:501.60px;font-size:10.4px;color:#3a3a3a;text-align:center;-webkit-text-stroke:0.25px #3a3a3a">19</div>
<div class="a" style="left:35px;top:526px;width:20px;height:1px;background:#d8d8d8;"></div>
<div class="b" style="left:36px;width:20px;top:517.60px;font-size:10.4px;color:#3a3a3a;text-align:center;-webkit-text-stroke:0.25px #3a3a3a">20</div>
<div class="a" style="left:35px;top:542px;width:20px;height:1px;background:#d8d8d8;"></div>
<div class="b" style="left:36px;width:20px;top:533.60px;font-size:10.4px;color:#3a3a3a;text-align:center;-webkit-text-stroke:0.25px #3a3a3a">21</div>
<div class="a" style="left:35px;top:558px;width:20px;height:1px;background:#d8d8d8;"></div>
<div class="b" style="left:36px;width:20px;top:549.60px;font-size:10.4px;color:#3a3a3a;text-align:center;-webkit-text-stroke:0.25px #3a3a3a">22</div>
<div class="a" style="left:35px;top:574px;width:20px;height:1px;background:#d8d8d8;"></div>
<div class="b" style="left:36px;width:20px;top:565.60px;font-size:10.4px;color:#3a3a3a;text-align:center;-webkit-text-stroke:0.25px #3a3a3a">23</div>
<div class="a" style="left:35px;top:590px;width:20px;height:1px;background:#d8d8d8;"></div>
<div class="b" style="left:36px;width:20px;top:581.60px;font-size:10.4px;color:#3a3a3a;text-align:center;-webkit-text-stroke:0.25px #3a3a3a">24</div>
<div style="-webkit-text-stroke-width:0.22px"><div class="b" style="left:83.5px;top:190.80px;font-size:23.66px;color:#000;font-weight:normal;">Возобновляемые генерирующие мощности</div><div class="a" style="left:82px;top:222px;width:304px;height:27px;background:#feb34f;"></div><div class="a" style="left:82px;top:249px;width:304px;height:16px;background:#fddeb3;"></div><div class="a" style="left:82px;top:265px;width:129px;height:160px;background:#fddeb3;"></div><div class="a" style="left:211px;top:265px;width:175px;height:160px;background:#fdefdd;"></div><div class="a" style="left:82px;top:393px;width:304px;height:1px;background:#f8b8a0;"></div><div class="b" style="left:83.2px;top:236.39px;font-size:15.6px;color:#1a1a1a;font-weight:normal;">По типам источника</div><div class="b" style="left:214px;top:255.15px;font-size:11.1px;color:#000;font-weight:bold;">Мощность, ГВт</div><div class="b" style="left:300.3px;top:255.12px;font-size:11.2px;color:#000;font-weight:bold;">Доля, %</div><div class="b" style="left:84.0px;top:271.09px;font-size:11.85px;color:#1a1a1a;font-weight:normal;">Гидроэнергетика</div><div class="b" style="left:214.1px;top:271.15px;font-size:11.7px;color:#8c8c8c;font-weight:normal;">1310</div><div class="b" style="left:300.3px;top:271.15px;font-size:11.7px;color:#8c8c8c;font-weight:normal;">49,3</div><div class="b" style="left:84.0px;top:287.09px;font-size:11.85px;color:#1a1a1a;font-weight:normal;">Ветряная</div><div class="b" style="left:214.1px;top:287.15px;font-size:11.7px;color:#8c8c8c;font-weight:normal;">623</div><div class="b" style="left:300.3px;top:287.15px;font-size:11.7px;color:#8c8c8c;font-weight:normal;">23,4</div><div class="b" style="left:84.0px;top:303.09px;font-size:11.85px;color:#1a1a1a;font-weight:normal;">Солнечная</div><div class="b" style="left:214.1px;top:303.15px;font-size:11.7px;color:#8c8c8c;font-weight:normal;">586</div><div class="b" style="left:300.3px;top:303.15px;font-size:11.7px;color:#8c8c8c;font-weight:normal;">22,1</div><div class="b" style="left:84.0px;top:319.09px;font-size:11.85px;color:#1a1a1a;font-weight:normal;">Другие</div><div class="b" style="left:214.1px;top:319.15px;font-size:11.7px;color:#8c8c8c;font-weight:normal;">138,5</div><div class="b" style="left:300.3px;top:319.15px;font-size:11.7px;color:#8c8c8c;font-weight:normal;">5,2</div><div class="b" style="left:88.9px;top:336.82px;font-size:8.6px;color:#c5611e;font-weight:normal;-webkit-text-stroke-width:0.08px">Биоэнергетика</div><div class="b" style="left:213.8px;top:336.82px;font-size:8.6px;color:#c5611e;font-weight:normal;-webkit-text-stroke-width:0.08px">124</div><div class="b" style="left:88.9px;top:352.82px;font-size:8.6px;color:#c5611e;font-weight:normal;-webkit-text-stroke-width:0.08px">Геотермальная</div><div class="b" style="left:213.8px;top:352.82px;font-size:8.6px;color:#c5611e;font-weight:normal;-webkit-text-stroke-width:0.08px">14</div><div class="b" style="left:88.9px;top:368.82px;font-size:8.6px;color:#c5611e;font-weight:normal;-webkit-text-stroke-width:0.08px">Морская энергия</div><div class="b" style="left:213.8px;top:368.82px;font-size:8.6px;color:#c5611e;font-weight:normal;-webkit-text-stroke-width:0.08px">0,5</div><div class="b" style="left:86.9px;top:410.78px;font-size:11.9px;color:#000;font-weight:bold;">Всего</div><div class="b" style="left:215px;top:410.98px;font-size:16.8px;color:#000;font-weight:normal;">2658</div><div class="a" style="left:428px;top:222px;width:433px;height:27px;background:#acd386;"></div><div class="a" style="left:428px;top:249px;width:302px;height:176px;background:#e2efd9;"></div><div class="a" style="left:730px;top:249px;width:131px;height:176px;background:#f0f6eb;"></div><div class="b" style="left:429.4px;top:236.24px;font-size:15.75px;color:#1a1a1a;font-weight:normal;">Основные показатели на конец 2019 г.</div><div class="b" style="left:430.0px;top:273.16px;font-size:11.95px;color:#1a1a1a;font-weight:normal;">Мировая мощность возобновляемых источников</div><div class="b" style="left:430.0px;top:290.66px;font-size:11.95px;color:#1a1a1a;font-weight:normal;">энергии</div><div class="b" style="left:430.0px;top:305.36px;font-size:11.95px;color:#1a1a1a;font-weight:normal;">Доля ветряных и солнечных мощностей в годовом</div><div class="b" style="left:430.0px;top:322.86px;font-size:11.95px;color:#1a1a1a;font-weight:normal;">приросте</div><div class="b" style="left:430.0px;top:337.16px;font-size:11.95px;color:#1a1a1a;font-weight:normal;">Доля возобновляемых источников в общем приросте</div><div class="b" style="left:430.0px;top:354.36px;font-size:11.95px;color:#1a1a1a;font-weight:normal;">энергогенерирующих мощностей</div><div class="b" style="left:430.0px;top:369.06px;font-size:11.95px;color:#1a1a1a;font-weight:normal;">Увеличение мощности возобновляемых источников</div><div class="b" style="left:430.0px;top:386.16px;font-size:11.95px;color:#1a1a1a;font-weight:normal;">энергии</div><div class="b" style="left:430.0px;top:409.16px;font-size:11.95px;color:#1a1a1a;font-weight:normal;">Прирост генерирующих мощностей</div><div class="b" style="left:775.2px;top:273.42px;font-size:16.4px;color:#1a1a1a;font-weight:normal;">2 658 ГВт</div><div class="b" style="left:775.2px;top:304.72px;font-size:16.4px;color:#1a1a1a;font-weight:normal;">90%</div><div class="b" style="left:775.2px;top:345.82px;font-size:16.4px;color:#1a1a1a;font-weight:normal;">72%</div><div class="b" style="left:775.2px;top:367.32px;font-size:16.4px;color:#1a1a1a;font-weight:normal;">7,4%</div><div class="b" style="left:775.2px;top:400.52px;font-size:16.4px;color:#1a1a1a;font-weight:normal;">176 ГВт</div><div class="a" style="left:82px;top:446px;width:563px;height:27px;background:#92cbf5;"></div><div class="a" style="left:82px;top:473px;width:563px;height:21px;background:#bddcf7;"></div><div class="a" style="left:82px;top:494px;width:129px;height:106px;background:#bddcf7;"></div><div class="a" style="left:211px;top:494px;width:434px;height:106px;background:#ddedfb;"></div><div class="b" style="left:83.5px;top:461.01px;font-size:15.55px;color:#1a1a1a;font-weight:normal;">Генерация по годам, ГВт</div><div class="b" style="left:214.3px;top:485.12px;font-size:11.2px;color:#000;font-weight:bold;">2010</div><div class="b" style="left:257.3px;top:485.12px;font-size:11.2px;color:#000;font-weight:bold;">2011</div><div class="b" style="left:300.3px;top:485.12px;font-size:11.2px;color:#000;font-weight:bold;">2012</div><div class="b" style="left:343.3px;top:485.12px;font-size:11.2px;color:#000;font-weight:bold;">2013</div><div class="b" style="left:387.3px;top:485.12px;font-size:11.2px;color:#000;font-weight:bold;">2014</div><div class="b" style="left:430.3px;top:485.12px;font-size:11.2px;color:#000;font-weight:bold;">2015</div><div class="b" style="left:473.3px;top:485.12px;font-size:11.2px;color:#000;font-weight:bold;">2016</div><div class="b" style="left:516.3px;top:485.12px;font-size:11.2px;color:#000;font-weight:bold;">2017</div><div class="b" style="left:559.3px;top:485.12px;font-size:11.2px;color:#000;font-weight:bold;">2018</div><div class="b" style="left:603.3px;top:485.12px;font-size:11.2px;color:#000;font-weight:bold;">2019</div><div class="b" style="left:84.3px;top:501.45px;font-size:11.7px;color:#1a1a1a;font-weight:normal;">В мире</div><div class="b" style="left:214.3px;top:501.45px;font-size:11.7px;color:#000;font-weight:normal;">1227</div><div class="b" style="left:257.3px;top:501.45px;font-size:11.7px;color:#000;font-weight:normal;">1332</div><div class="b" style="left:300.3px;top:501.45px;font-size:11.7px;color:#000;font-weight:normal;">1445</div><div class="b" style="left:343.3px;top:501.45px;font-size:11.7px;color:#000;font-weight:normal;">1563</div><div class="b" style="left:387.3px;top:501.45px;font-size:11.7px;color:#000;font-weight:normal;">1693</div><div class="b" style="left:430.3px;top:501.45px;font-size:11.7px;color:#000;font-weight:normal;">1846</div><div class="b" style="left:473.3px;top:501.45px;font-size:11.7px;color:#000;font-weight:normal;">2009</div><div class="b" style="left:516.3px;top:501.45px;font-size:11.7px;color:#000;font-weight:normal;">2182</div><div class="b" style="left:559.3px;top:501.45px;font-size:11.7px;color:#000;font-weight:normal;">2361</div><div class="b" style="left:603.3px;top:501.45px;font-size:11.7px;color:#000;font-weight:normal;">2658</div><div class="b" style="left:84.3px;top:517.45px;font-size:11.7px;color:#1a1a1a;font-weight:normal;">Африка</div><div class="b" style="left:214.3px;top:517.45px;font-size:11.7px;color:#8c8c8c;font-weight:normal;">27</div><div class="b" style="left:257.3px;top:517.45px;font-size:11.7px;color:#8c8c8c;font-weight:normal;">28</div><div class="b" style="left:300.3px;top:517.45px;font-size:11.7px;color:#8c8c8c;font-weight:normal;">29</div><div class="b" style="left:343.3px;top:517.45px;font-size:11.7px;color:#8c8c8c;font-weight:normal;">31</div><div class="b" style="left:387.3px;top:517.45px;font-size:11.7px;color:#8c8c8c;font-weight:normal;">33</div><div class="b" style="left:430.3px;top:517.45px;font-size:11.7px;color:#8c8c8c;font-weight:normal;">35</div><div class="b" style="left:473.3px;top:517.45px;font-size:11.7px;color:#8c8c8c;font-weight:normal;">38</div><div class="b" style="left:516.3px;top:517.45px;font-size:11.7px;color:#8c8c8c;font-weight:normal;">43</div><div class="b" style="left:559.3px;top:517.45px;font-size:11.7px;color:#8c8c8c;font-weight:normal;">46</div><div class="b" style="left:603.3px;top:517.45px;font-size:11.7px;color:#8c8c8c;font-weight:normal;">48</div><div class="b" style="left:84.3px;top:533.45px;font-size:11.7px;color:#1a1a1a;font-weight:normal;">Азия</div><div class="b" style="left:214.3px;top:533.45px;font-size:11.7px;color:#8c8c8c;font-weight:normal;">387</div><div class="b" style="left:257.3px;top:533.45px;font-size:11.7px;color:#8c8c8c;font-weight:normal;">433</div><div class="b" style="left:300.3px;top:533.45px;font-size:11.7px;color:#8c8c8c;font-weight:normal;">478</div><div class="b" style="left:343.3px;top:533.45px;font-size:11.7px;color:#8c8c8c;font-weight:normal;">552</div><div class="b" style="left:387.3px;top:533.45px;font-size:11.7px;color:#8c8c8c;font-weight:normal;">628</div><div class="b" style="left:430.3px;top:533.45px;font-size:11.7px;color:#8c8c8c;font-weight:normal;">717</div><div class="b" style="left:473.3px;top:533.45px;font-size:11.7px;color:#8c8c8c;font-weight:normal;">809</div><div class="b" style="left:516.3px;top:533.45px;font-size:11.7px;color:#8c8c8c;font-weight:normal;">915</div><div class="b" style="left:559.3px;top:533.45px;font-size:11.7px;color:#8c8c8c;font-weight:normal;">1024</div><div class="b" style="left:603.3px;top:533.45px;font-size:11.7px;color:#8c8c8c;font-weight:normal;">1119</div><div class="b" style="left:84.3px;top:549.45px;font-size:11.7px;color:#1a1a1a;font-weight:normal;">Центральная Америка</div><div class="b" style="left:214.3px;top:549.45px;font-size:11.7px;color:#8c8c8c;font-weight:normal;">8</div><div class="b" style="left:257.3px;top:549.45px;font-size:11.7px;color:#8c8c8c;font-weight:normal;">8</div><div class="b" style="left:300.3px;top:549.45px;font-size:11.7px;color:#8c8c8c;font-weight:normal;">9</div><div class="b" style="left:343.3px;top:549.45px;font-size:11.7px;color:#8c8c8c;font-weight:normal;">10</div><div class="b" style="left:387.3px;top:549.45px;font-size:11.7px;color:#8c8c8c;font-weight:normal;">10</div><div class="b" style="left:430.3px;top:549.45px;font-size:11.7px;color:#8c8c8c;font-weight:normal;">12</div><div class="b" style="left:473.3px;top:549.45px;font-size:11.7px;color:#8c8c8c;font-weight:normal;">13</div><div class="b" style="left:516.3px;top:549.45px;font-size:11.7px;color:#8c8c8c;font-weight:normal;">14</div><div class="b" style="left:559.3px;top:549.45px;font-size:11.7px;color:#8c8c8c;font-weight:normal;">15</div><div class="b" style="left:603.3px;top:549.45px;font-size:11.7px;color:#8c8c8c;font-weight:normal;">16</div><div class="b" style="left:84.3px;top:565.45px;font-size:11.7px;color:#1a1a1a;font-weight:normal;">Евразия</div><div class="b" style="left:214.3px;top:565.45px;font-size:11.7px;color:#8c8c8c;font-weight:normal;">70</div><div class="b" style="left:257.3px;top:565.45px;font-size:11.7px;color:#8c8c8c;font-weight:normal;">71</div><div class="b" style="left:300.3px;top:565.45px;font-size:11.7px;color:#8c8c8c;font-weight:normal;">77</div><div class="b" style="left:343.3px;top:565.45px;font-size:11.7px;color:#8c8c8c;font-weight:normal;">81</div><div class="b" style="left:387.3px;top:565.45px;font-size:11.7px;color:#8c8c8c;font-weight:normal;">84</div><div class="b" style="left:430.3px;top:565.45px;font-size:11.7px;color:#8c8c8c;font-weight:normal;">88</div><div class="b" style="left:473.3px;top:565.45px;font-size:11.7px;color:#8c8c8c;font-weight:normal;">91</div><div class="b" style="left:516.3px;top:565.45px;font-size:11.7px;color:#8c8c8c;font-weight:normal;">99</div><div class="b" style="left:559.3px;top:565.45px;font-size:11.7px;color:#8c8c8c;font-weight:normal;">103</div><div class="b" style="left:603.3px;top:565.45px;font-size:11.7px;color:#8c8c8c;font-weight:normal;">106</div><div class="a" style="left:644px;top:447px;width:268px;height:153px;background:#fff;"></div><div class="a" style="left:861px;top:445px;width:51px;height:10px;background:#fff;"></div><div class="b" style="left:661px;top:467.95px;font-size:11.7px;color:#7f7f7f;font-weight:normal;-webkit-text-stroke-width:0.1px">По данным</div><div class="b" style="left:661px;top:482.95px;font-size:11.7px;color:#7f7f7f;font-weight:normal;-webkit-text-stroke-width:0.1px">International Renewable Energy Agency</div><svg class="a" style="left:660px;top:513px;" width="64" height="34" viewBox="0 0 64 34" fill="none" preserveAspectRatio="none">
<path d="M32 17 C29 10, 24 3.6, 16 3.6 A13.4 13.4 0 0 0 16 30.4 C24 30.4, 29 24, 32 17 C35 10, 40 3.6, 48 3.6 A13.4 13.4 0 0 1 48 30.4 C40 30.4, 35 24, 32 17Z" stroke="#1b7eac" stroke-width="1.7"/>
<path d="M5 8 C9 3, 14 3.4, 18 3.7" stroke="#1b7eac" stroke-width="2.8" stroke-linecap="round"/>
<path d="M46 30.3 C50 30.6, 56 29, 59.5 25" stroke="#1b7eac" stroke-width="2.8" stroke-linecap="round"/>
<path d="M26.5 26.5 L37.5 7.5" stroke="#fff" stroke-width="5.5"/>
<path d="M12 30.4 C22 30.8, 28 24, 32 17 C36 10, 42 3.6, 50 3.7" stroke="#1b7eac" stroke-width="3.4"/>
<path d="M10 6.5 L17 4.8 L23.5 6.5 L22.5 10 L20 12 L19 14.5 L16.5 13 L13 11.5 L10.5 9.5Z" fill="#1b7eac"/>
<path d="M17.5 15.5 L21.5 16.5 L23.5 19.5 L21 24 L19.5 28.5 L18 24 L16.5 18.5Z" fill="#1b7eac"/>
<path d="M40 7.5 L46 4.8 L55 5 L59.5 9.5 L58 13 L55.5 15.5 L52 14 L49.5 12.5 L46.5 13 L43.5 12 L40.5 10.5Z" fill="#1b7eac"/>
<path d="M38.5 13.5 L45 13 L47.5 16.5 L46.5 20.5 L44.5 25 L42.5 24 L41.5 19.5 L38.5 17Z" fill="#1b7eac"/>
<path d="M54.5 21.5 L58.5 21 L59.5 24 L55.5 24.5Z" fill="#1b7eac"/>
</svg><div class="b" style="left:729px;top:530.85px;font-size:36.5px;color:#5e5f61;font-weight:normal;letter-spacing:-1.2px;-webkit-text-stroke-width:0">IRENA</div><div class="b" style="left:661.5px;top:555.10px;font-size:9.8px;color:#1b87b8;font-weight:normal;-webkit-text-stroke-width:0">International Renewable Energy Agency</div></div>
</div></div>
<div class="a" style="left:978px;top:140px;width:11px;height:434px;background:#f1f1f1;"></div><div class="a" style="left:978px;top:145px;width:10px;height:10px;background:#f7f7f7;border:1px solid #d4d4d4"></div><svg class="a" style="left:980px;top:147px;" width="7" height="5" viewBox="0 0 7 5" fill="none" preserveAspectRatio="none"><path d="M0.5 4L3.5 1L6.5 4Z" fill="#a8a8a8"/></svg><div class="a" style="left:978px;top:156px;width:10px;height:291px;background:#f1f1f1;border:1px solid #d4d4d4"></div><svg class="a" style="left:981px;top:297px;" width="4" height="10" viewBox="0 0 4 10" fill="none" preserveAspectRatio="none"><path d="M0 1H4M0 3.5H4M0 6H4M0 8.5H4" stroke="#c8c8c8"/></svg><div class="a" style="left:978px;top:562px;width:10px;height:11px;background:#f7f7f7;border:1px solid #d4d4d4"></div><svg class="a" style="left:980px;top:565px;" width="7" height="5" viewBox="0 0 7 5" fill="none" preserveAspectRatio="none"><path d="M0.5 1L3.5 4L6.5 1Z" fill="#a8a8a8"/></svg><div class="a" style="left:35px;top:574px;width:954px;height:11px;background:#f1f1f1;"></div><div class="a" style="left:37px;top:574px;width:9px;height:10px;background:#f7f7f7;border:1px solid #d4d4d4"></div><svg class="a" style="left:39px;top:576px;" width="5" height="7" viewBox="0 0 5 7" fill="none" preserveAspectRatio="none"><path d="M4 0.5L1 3.5L4 6.5Z" fill="#a8a8a8"/></svg><div class="a" style="left:47px;top:574px;width:839px;height:10px;background:#f7f7f7;border:1px solid #d4d4d4"></div><svg class="a" style="left:462px;top:577px;" width="9" height="4" viewBox="0 0 9 4" fill="none" preserveAspectRatio="none"><path d="M1 0V4M3 0V4M5 0V4M7 0V4" stroke="#c8c8c8"/></svg><div class="a" style="left:966px;top:574px;width:11px;height:10px;background:#f7f7f7;border:1px solid #d4d4d4"></div><svg class="a" style="left:969px;top:576px;" width="5" height="7" viewBox="0 0 5 7" fill="none" preserveAspectRatio="none"><path d="M1 0.5L4 3.5L1 6.5Z" fill="#a8a8a8"/></svg>
<div class="a" style="left:989px;top:123px;width:1px;height:462px;background:#d4d4d4;"></div>
<svg class="a" style="left:999px;top:142px;" width="14" height="12" viewBox="0 0 14 12" fill="none" preserveAspectRatio="none"><rect x="0.5" y="0.5" width="13" height="11" stroke="#444"/><rect x="2.5" y="3" width="9" height="6" stroke="#444"/><path d="M2.5 5H11.5M2.5 7H11.5" stroke="#444" stroke-width="0.8"/></svg><svg class="a" style="left:999px;top:175px;" width="14" height="10" viewBox="0 0 14 10" fill="none" preserveAspectRatio="none"><rect x="0.5" y="0.5" width="13" height="9" stroke="#a6a6a6"/><path d="M0.5 3.5H13.5M0.5 6.5H13.5M5 0.5V9.5M9 0.5V9.5" stroke="#a6a6a6"/></svg><svg class="a" style="left:1000px;top:204px;" width="13" height="13" viewBox="0 0 13 13" fill="none" preserveAspectRatio="none"><path d="M6 0.5H0.5V6.5" stroke="#a6a6a6"/><circle cx="8" cy="8" r="4.3" stroke="#a6a6a6"/></svg><svg class="a" style="left:999px;top:235px;" width="14" height="12" viewBox="0 0 14 12" fill="none" preserveAspectRatio="none"><rect x="0.5" y="0.5" width="13" height="11" stroke="#a6a6a6"/><path d="M1 9L5 5.5L8 8L10 6.5L13 9" stroke="#a6a6a6"/><rect x="3" y="2.5" width="1.5" height="1.5" fill="#a6a6a6"/></svg><svg class="a" style="left:1000px;top:265px;" width="12" height="12" viewBox="0 0 12 12" fill="none" preserveAspectRatio="none"><rect x="0.5" y="7.5" width="2" height="4" stroke="#a6a6a6"/><rect x="4.5" y="4.5" width="2" height="7" stroke="#a6a6a6"/><rect x="8.5" y="0.5" width="2" height="11" stroke="#a6a6a6"/></svg><div class="b" style="left:1002px;top:303.50px;font-size:13px;color:#a6a6a6;font-weight:bold;">¶</div><div class="b" style="left:1000px;top:330.19px;font-size:11px;color:#a6a6a6;font-weight:normal;">Ta</div><svg class="a" style="left:1000px;top:337px;" width="11" height="4" viewBox="0 0 11 4" fill="none" preserveAspectRatio="none"><path d="M1 3.5Q5.5 -1 10 3.5" stroke="#a6a6a6"/></svg><svg class="a" style="left:1000px;top:360px;" width="12" height="12" viewBox="0 0 12 12" fill="none" preserveAspectRatio="none"><rect x="0.5" y="0.5" width="2" height="2" stroke="#a6a6a6"/><rect x="0.5" y="5.5" width="2" height="6" stroke="#a6a6a6"/><rect x="5.5" y="0.5" width="6" height="2" stroke="#a6a6a6"/><path d="M10 6V9H6M7.5 7.5L6 9L7.5 10.5" stroke="#a6a6a6"/></svg><svg class="a" style="left:999px;top:390px;" width="14" height="14" viewBox="0 0 14 14" fill="none" preserveAspectRatio="none"><path d="M0.5 0.5H10.5V6M7 11.5H0.5V0.5" stroke="#a6a6a6"/><path d="M2.5 3.5H8.5M2.5 6H6" stroke="#a6a6a6"/><path d="M7 7H13L10.5 10V13L9.5 12.5V10Z" fill="#a6a6a6"/></svg>
<div class="a" style="left:3px;top:585px;width:1018px;height:1px;background:#d0d0d0;"></div>
<svg class="a" style="left:16px;top:590px;" width="10" height="10" viewBox="0 0 10 10" fill="none" preserveAspectRatio="none"><path d="M1 1V9" stroke="#b0b0b0" stroke-width="1.2"/><path d="M9 1V9L3 5Z" fill="#b0b0b0"/></svg><svg class="a" style="left:36px;top:590px;" width="8" height="10" viewBox="0 0 8 10" fill="none" preserveAspectRatio="none"><path d="M7 1V9L1 5Z" fill="#b0b0b0"/></svg><svg class="a" style="left:53px;top:590px;" width="8" height="10" viewBox="0 0 8 10" fill="none" preserveAspectRatio="none"><path d="M1 1V9L7 5Z" fill="#333"/></svg><svg class="a" style="left:71px;top:590px;" width="10" height="10" viewBox="0 0 10 10" fill="none" preserveAspectRatio="none"><path d="M1 1V9L7 5Z" fill="#333"/><path d="M8.5 1V9" stroke="#333" stroke-width="1.2"/></svg><div class="a" style="left:94px;top:586px;width:1px;height:20px;background:#d4d4d4;"></div><svg class="a" style="left:105px;top:590px;" width="11" height="11" viewBox="0 0 11 11" fill="none" preserveAspectRatio="none"><path d="M5.5 0.5V10.5M0.5 5.5H10.5" stroke="#444" stroke-width="1.1"/></svg><div class="a" style="left:125px;top:585px;width:50px;height:21px;background:#fff;"></div><div class="a" style="left:125px;top:585px;width:50px;height:3px;background:#40865c;"></div><div class="a" style="left:124px;top:586px;width:1px;height:20px;background:#d4d4d4;"></div><div class="a" style="left:175px;top:586px;width:1px;height:20px;background:#d4d4d4;"></div><div class="b" style="left:132.8px;top:595.75px;font-size:8.8px;color:#222;font-weight:bold;">Данные</div><div class="b" style="left:185.6px;top:595.75px;font-size:8.8px;color:#8a8a8a;font-weight:normal;">Графики</div><div class="b" style="left:241px;top:595.75px;font-size:8.8px;color:#8a8a8a;font-weight:normal;">Мощности по годам</div><div class="b" style="left:345px;top:595.75px;font-size:8.8px;color:#8a8a8a;font-weight:normal;">Прирост по годам</div><div class="b" style="left:441.5px;top:595.75px;font-size:8.8px;color:#8a8a8a;font-weight:normal;">Доли по технологиям в год</div><div class="a" style="left:230px;top:586px;width:1px;height:20px;background:#d4d4d4;"></div><div class="a" style="left:333px;top:586px;width:1px;height:20px;background:#d4d4d4;"></div><div class="a" style="left:428px;top:586px;width:1px;height:20px;background:#d4d4d4;"></div><div class="a" style="left:552px;top:586px;width:1px;height:20px;background:#d4d4d4;"></div><div class="a" style="left:553px;top:586px;width:340px;height:20px;background:#f1f1f1;"></div><div class="b" style="left:564.6px;top:595.77px;font-size:8.75px;color:#444;font-weight:normal;">Среднее: 2014,5</div><div class="b" style="left:643px;top:595.77px;font-size:8.75px;color:#444;font-weight:normal;">Количество: 10</div><div class="b" style="left:715.8px;top:595.77px;font-size:8.75px;color:#444;font-weight:normal;">Мин: 2010</div><div class="b" style="left:767.8px;top:595.77px;font-size:8.75px;color:#444;font-weight:normal;">Макс: 2019</div><div class="b" style="left:823.5px;top:595.77px;font-size:8.75px;color:#444;font-weight:normal;">Сумма: 20145</div><div class="a" style="left:892px;top:586px;width:1px;height:20px;background:#d4d4d4;"></div><div class="a" style="left:906px;top:595px;width:9px;height:1.2px;background:#444;"></div><div class="b" style="left:922px;top:595.84px;font-size:8.55px;color:#333;font-weight:bold;">Масштаб 100%</div><svg class="a" style="left:991px;top:590px;" width="10" height="10" viewBox="0 0 10 10" fill="none" preserveAspectRatio="none"><path d="M5 0.5V9.5M0.5 5H9.5" stroke="#444" stroke-width="1.1"/></svg>
<div class="a" style="left:0px;top:0px;width:1024px;height:608px;background:transparent;border:1px solid #939393"></div>
</div></body></html>
